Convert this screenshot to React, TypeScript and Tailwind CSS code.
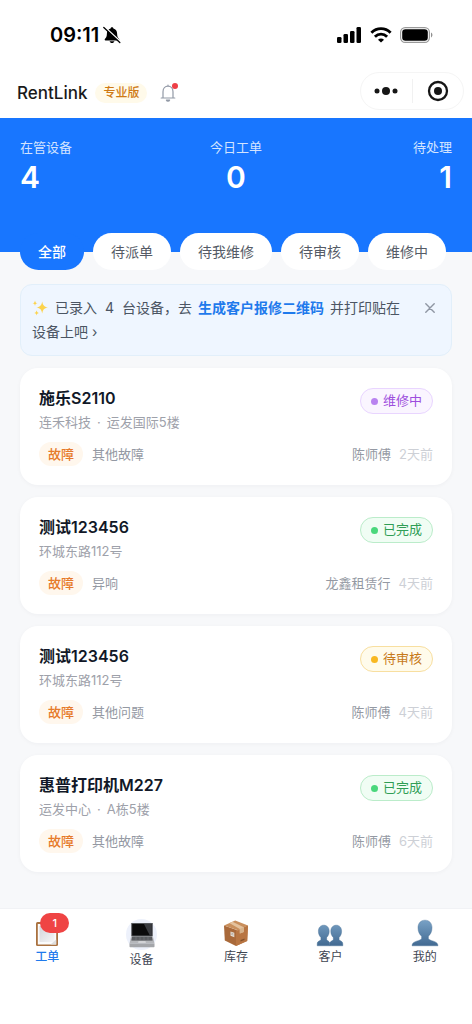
import { useState } from 'react'
import type { ReactNode } from 'react'
import clsx from 'clsx'

type Status = 'repairing' | 'done' | 'review'

interface Order {
  id: number
  device: string
  address: string[]
  issue: string
  owner: string
  time: string
  status: Status
}

const ORDERS: Order[] = [
  { id: 1, device: '施乐S2110', address: ['连禾科技', '运发国际5楼'], issue: '其他故障', owner: '陈师傅', time: '2天前', status: 'repairing' },
  { id: 2, device: '测试123456', address: ['环城东路112号'], issue: '异响', owner: '龙鑫租赁行', time: '4天前', status: 'done' },
  { id: 3, device: '测试123456', address: ['环城东路112号'], issue: '其他问题', owner: '陈师傅', time: '4天前', status: 'review' },
  { id: 4, device: '惠普打印机M227', address: ['运发中心', 'A栋5楼'], issue: '其他故障', owner: '陈师傅', time: '6天前', status: 'done' },
]

const STATUS: Record<Status, { label: string; pill: string; dot: string }> = {
  repairing: { label: '维修中', pill: 'border-[#e9d5ff] bg-[#faf5ff] text-[#9d4edd]', dot: 'bg-[#b983f0]' },
  done: { label: '已完成', pill: 'border-[#bbecca] bg-[#f0fdf4] text-[#2f9e55]', dot: 'bg-[#4ad77c]' },
  review: { label: '待审核', pill: 'border-[#f8dfa0] bg-[#fffbeb] text-[#c77a1a]', dot: 'bg-[#f8b822]' },
}

const TABS = ['全部', '待派单', '待我维修', '待审核', '维修中']

export default function App() {
  const [tab, setTab] = useState('全部')
  const [showTip, setShowTip] = useState(true)

  return (
    <div className="flex min-h-screen flex-col bg-[#f7f8fa] font-['Inter','Noto_Sans_CJK_SC',sans-serif] text-[#111827]">
      <StatusBar />
      <Header />

      {/* Summary */}
      <section className="grid h-[134px] grid-cols-3 bg-[#1876ff] px-5 pt-[19px] text-white">
        <Stat label="在管设备" value={4} />
        <Stat label="今日工单" value={0} className="text-center" />
        <Stat label="待处理" value={1} className="text-right" />
      </section>

      {/* Tabs */}
      <div className="relative -mt-[19px] flex gap-[9px] overflow-x-auto px-5">
        {TABS.map((name) => (
          <button
            key={name}
            onClick={() => setTab(name)}
            className={clsx(
              'h-[37px] shrink-0 rounded-full px-[18px] text-sm',
              tab === name ? 'bg-[#1876ff] font-medium text-white' : 'bg-white text-[#555b66]',
            )}
          >
            {name}
          </button>
        ))}
      </div>

      <main className="flex flex-1 flex-col gap-3 px-5 pt-[14px] pb-9">
        {showTip && (
          <div className="flex items-start gap-3 rounded-xl border border-[#e2effa] bg-[#eff6ff] py-[11px] pr-[9px] pl-[11px]">
            <p className="flex-1 text-sm leading-6 text-[#4b5563]">
              <Sparkles /> 已录入<span className="mx-2">4</span>台设备，去
              <a href="#qrcode" className="mx-[6px] font-bold text-[#1f7aec]">
                生成客户报修二维码
              </a>
              <span className="whitespace-nowrap">并打印贴在</span>
              <wbr />
              <span className="whitespace-nowrap">设备上吧 ›</span>
            </p>
            <button aria-label="关闭" onClick={() => setShowTip(false)} className="flex size-6 items-center justify-center text-[#8f96a3]">
              <svg viewBox="0 0 10 10" className="size-[10px]" stroke="currentColor" strokeWidth="1.4" strokeLinecap="round">
                <path d="M.8.8l8.4 8.4M9.2.8L.8 9.2" />
              </svg>
            </button>
          </div>
        )}

        {ORDERS.map((order) => (
          <OrderCard key={order.id} order={order} />
        ))}
      </main>

      <TabBar />
    </div>
  )
}

function StatusBar() {
  return (
    <div className="flex h-[68px] items-center justify-between bg-white pt-[2px] pr-[39px] pl-[50px] text-black">
      <div className="flex items-center gap-1">
        <span className="text-xl leading-6 font-semibold">09:11</span>
        <svg viewBox="0 0 18 18" className="size-[18px]">
          <path d="M9 1.2c.8 0 1.3.5 1.4 1.2 2.3.6 3.7 2.4 3.7 5 0 3.3.8 4.3 2 5.500.5.6.2 1.500-.6 1.500H2.500c-.8 0-1.100-.9-.6-1.500 1.200-1.200 2-2.200 2-5.500 0-2.600 1.400-4.400 3.700-5C7.700 1.700 8.200 1.200 9 1.200zM6.600 15.200h4.800c-.3 1.100-1.200 1.800-2.400 1.800s-2.100-.7-2.400-1.800z" />
          <path d="M2 1.400l15.500 14.200" stroke="#fff" strokeWidth="1.500" />
          <path d="M.8 1.500l16 15" stroke="#000" strokeWidth="1.300" strokeLinecap="round" />
        </svg>
      </div>
      <div className="flex items-center gap-2">
        <svg viewBox="0 0 25 16" className="h-4 w-[25px]">
          <rect x="0" y="10" width="4.500" height="6" rx="1.300" />
          <rect x="6.500" y="7" width="4.500" height="9" rx="1.300" />
          <rect x="13" y="4" width="4.500" height="12" rx="1.300" />
          <rect x="19.500" y="0" width="4.500" height="16" rx="1.300" />
        </svg>
        <svg viewBox="0 0 22 16" className="h-4 w-[22px]" fill="none" stroke="#000" strokeWidth="2.900">
          <path d="M1.400 5.700C6.900.3 15.100.3 20.600 5.700" />
          <path d="M4.900 9.700c3.500-3.400 8.700-3.400 12.200 0" />
          <path d="M11 15.600l-3-2.900c1.700-1.600 4.300-1.600 6 0z" fill="#000" stroke="none" />
        </svg>
        <svg viewBox="0 0 33 16" className="h-4 w-[33px]">
          <rect x=".6" y=".6" width="28.800" height="14.800" rx="4.600" fill="none" stroke="#9a9a9a" strokeWidth="1.200" />
          <rect x="2.200" y="2.200" width="25.600" height="11.600" rx="3.200" />
          <path d="M31 5.600c1.900.7 1.900 4.100 0 4.800z" fill="#8f8f8f" />
        </svg>
      </div>
    </div>
  )
}

function Header() {
  return (
    <header className="flex h-[50px] items-center justify-between bg-white pr-2 pb-1 pl-[17px]">
      <div className="flex items-center pt-1">
        <h1 className="text-[17px] leading-6 font-medium text-[#1a1a1a]">RentLink</h1>
        <span className="ml-2 rounded-full bg-[#fffaea] px-2 text-xs leading-5 font-medium text-[#cf7a15]">专业版</span>
        <button aria-label="通知" className="relative ml-3">
          <svg viewBox="0 0 18 20" className="h-5 w-[18px]" fill="none" stroke="#9299a6" strokeWidth="1.200" strokeLinecap="round" strokeLinejoin="round">
            <path d="M9 2v1M4 14.800V8.700C4 5.500 6.200 3.100 9 3.100s5 2.400 5 5.600v6.100M2.200 15h13.600" />
            <path d="M7.400 17c.5 1.500 2.700 1.500 3.200 0z" />
          </svg>
          <span className="absolute top-0 -right-px size-[6px] rounded-full bg-[#ee3f46]" />
        </button>
      </div>
      <div className="flex h-[38px] w-[104px] items-center rounded-full border border-[#f5f5f5] bg-white">
        <button aria-label="更多" className="flex flex-1 justify-center">
          <svg viewBox="0 0 24 10" className="h-[10px] w-6" fill="#161616">
            <circle cx="3" cy="5" r="2.500" />
            <circle cx="12" cy="5" r="4" />
            <circle cx="21" cy="5" r="2.500" />
          </svg>
        </button>
        <span className="h-6 w-px bg-[#f1f1f1]" />
        <button aria-label="退出" className="flex flex-1 justify-center">
          <svg viewBox="0 0 22 22" className="size-[22px]">
            <circle cx="11" cy="11" r="9" fill="none" stroke="#161616" strokeWidth="2.300" />
            <circle cx="11" cy="11" r="4" fill="#161616" />
          </svg>
        </button>
      </div>
    </header>
  )
}

function Stat({ label, value, className }: { label: string; value: number; className?: string }) {
  return (
    <div className={className}>
      <div className="text-[13px] leading-5 text-[#d3e4ff]">{label}</div>
      <div className="text-[30px] leading-10 font-semibold">{value}</div>
    </div>
  )
}

function OrderCard({ order }: { order: Order }) {
  const status = STATUS[order.status]
  return (
    <article className="rounded-[18px] bg-white px-[19px] pt-[18px] pb-[19px] shadow-[0_1px_4px_rgba(15,23,42,0.04)]">
      <div className="flex items-start justify-between">
        <div>
          <h2 className="text-base leading-6 font-semibold">{order.device}</h2>
          <p className="mt-[2px] text-[13px] leading-5 text-[#9ea1aa]">
            {order.address.map((part, i) => (
              <span key={part}>
                {i > 0 && <span className="mx-[6px]">·</span>}
                {part}
              </span>
            ))}
          </p>
        </div>
        <span className={clsx('mt-[2px] flex h-[26px] items-center gap-[5px] rounded-full border px-[10px] text-[13px]', status.pill)}>
          <span className={clsx('size-[7px] rounded-full', status.dot)} />
          {status.label}
        </span>
      </div>
      <div className="mt-[10px] flex items-center text-[13px] leading-6 text-[#9499a3]">
        <span className="rounded-full bg-[#fff7ed] px-[9px] font-medium text-[#e67a2a]">故障</span>
        <span className="ml-[9px]">{order.issue}</span>
        <span className="ml-auto">{order.owner}</span>
        <span className="ml-2 text-[#cdd0d6]">{order.time}</span>
      </div>
    </article>
  )
}

function TabBar() {
  return (
    <nav className="grid h-[116px] grid-cols-5 items-start border-t border-[#f1f2f5] bg-white pt-[10px]">
      <TabItem label="工单" icon={<ClipboardIcon />} badge={1} active />
      <TabItem label="设备" icon={<LaptopIcon />} large />
      <TabItem label="库存" icon={<BoxIcon />} />
      <TabItem label="客户" icon={<UsersIcon />} />
      <TabItem label="我的" icon={<UserIcon />} />
    </nav>
  )
}

interface TabItemProps {
  label: string
  icon: ReactNode
  badge?: number
  active?: boolean
  large?: boolean
}

function TabItem({ label, icon, badge, active, large }: TabItemProps) {
  return (
    <a href={`#${label}`} className="flex flex-col items-center">
      <span className={clsx('relative flex items-center justify-center', large ? 'size-[31px] rounded-full bg-[#edf1fb]' : 'size-7')}>
        {icon}
        {badge && (
          <span className="absolute -top-[6px] left-[7px] w-[29px] rounded-full bg-[#ef4444] text-center text-[11px] leading-5 font-medium text-white">
            {badge}
          </span>
        )}
      </span>
      <span className={clsx('text-xs leading-5', active ? 'font-medium text-[#1f7aec]' : 'text-[#3f4652]')}>{label}</span>
    </a>
  )
}

function Sparkles() {
  return (
    <svg viewBox="0 0 17 16" className="mr-[2px] inline h-4 w-[17px] align-[-3px]" fill="#fcd34d">
      <path d="M10.200 1.500c.7 3.800 1.700 5.200 5.800 6-4.100.8-5.100 2.200-5.800 6-.7-3.800-1.700-5.200-5.800-6 4.100-.8 5.100-2.200 5.800-6z" />
      <path d="M3 .6c.3 1.700.8 2.400 2.500 2.700C3.800 3.600 3.300 4.300 3 6 2.700 4.300 2.200 3.600.5 3.300 2.200 3 2.700 2.300 3 .6z" />
      <path d="M4.600 10.200c.3 1.700.8 2.400 2.500 2.700-1.700.3-2.200 1-2.500 2.700-.3-1.700-.8-2.400-2.500-2.700 1.700-.3 2.200-1 2.500-2.700z" />
    </svg>
  )
}

function ClipboardIcon() {
  return (
    <svg viewBox="0 0 28 28" className="size-7">
      <defs>
        <linearGradient id="paper" x1="0" y1="0" x2="1" y2="1">
          <stop offset="0" stopColor="#d3d5da" />
          <stop offset="1" stopColor="#f6f6f6" />
        </linearGradient>
      </defs>
      <rect x="3" y="3" width="22" height="24" rx="1.500" fill="#a9713f" />
      <rect x="4.800" y="5" width="18.400" height="20.500" fill="#fbfbfb" />
      <rect x="6.500" y="7" width="15" height="16" fill="url(#paper)" />
      <rect x="9" y="1.500" width="10" height="4" rx="1" fill="#9ba1a8" />
      <path d="M17.500 25.500l5.700-5v5z" fill="#dedede" />
    </svg>
  )
}

function LaptopIcon() {
  return (
    <svg viewBox="0 0 28 28" className="size-7">
      <path d="M3.200 2h21.600v13H3.200z" fill="#55585c" />
      <path d="M4.200 3h19.600v11.500H4.200z" fill="#0b0b0c" />
      <path d="M16 3h7.800v11.500h-2z" fill="#3a3c40" />
      <path d="M3.200 15h21.600l1.700 7.500h-25z" fill="#b5b7bb" />
      <path d="M4.200 15.500h19.600l.8 4H3.400z" fill="#4c4e52" />
      <path d="M4.300 16.900h19.400M4 18.200h20M8 15.500v4M12 15.500v4M16 15.500v4M20 15.500v4" stroke="#8b8d92" strokeWidth=".4" />
      <path d="M10.500 20h7l.4 2.200h-7.800z" fill="#d2d3d6" />
      <path d="M1.500 22.500h25v3c0 .4-.3.700-.7.700H2.200c-.4 0-.7-.3-.7-.7z" fill="#a4a6aa" />
    </svg>
  )
}

function BoxIcon() {
  return (
    <svg viewBox="0 0 28 28" className="size-7">
      <path d="M2 6.500l12 4.200V27L2.800 21.500z" fill="#a9693a" />
      <path d="M26 6.500l-9.500 4.200L14 27l11.200-5z" fill="#be7f4a" />
      <path d="M2 6.500L13.200 1.500 26 6.500l-9.500 5z" fill="#c98f5c" />
      <path d="M14 11l2.500.3L26 6.500l-.8 15.500L14 27z" fill="#b87542" />
      <path d="M7.300 4.100l3.200-1.400 11.300 5.500v4.700l-4 1.500v-4.300z" fill="#e4c29d" />
      <path d="M17.800 10.100l4-1.900v4.700l-4 1.500z" fill="#d6b28b" />
      <path d="M8.500 12.500l3.800 1.300v4.400l-3.800-1.500z" fill="#e7dfd5" />
      <path d="M9.200 14l2.300.8M9.200 15.300l2.300.8" stroke="#8e8378" strokeWidth=".5" />
      <path d="M18.500 21l4-1.600v1.500l-4 1.600z" fill="#80502b" />
    </svg>
  )
}

function BlueGradient({ id }: { id: string }) {
  return (
    <linearGradient id={id} x1="0" y1="0" x2="0" y2="28" gradientUnits="userSpaceOnUse">
      <stop offset="0" stopColor="#7ba4c8" />
      <stop offset="1" stopColor="#3f678f" />
    </linearGradient>
  )
}

function UsersIcon() {
  return (
    <svg viewBox="0 0 28 28" className="size-7">
      <BlueGradient id="users" />
      <g fill="url(#users)" stroke="#466f96" strokeWidth=".4">
        <path d="M7.800 6.200c3.300 0 5.400 2.400 5.400 6 0 2.600-.9 4.900-2.500 6.200v2.200c.3 1.400 3.100 1.100 3.100 4.200v2H1.200v-2c0-3.100 3.400-2.800 3.700-4.200v-2.200c-1.600-1.300-2.500-3.600-2.500-6.200 0-3.600 2.100-6 5.400-6z" />
        <path d="M20.200 6.200c3.300 0 5.400 2.400 5.400 6 0 2.600-.9 4.900-2.500 6.200v2.200c.3 1.400 3.700 1.100 3.700 4.200v2h-13v-2c0-3.100 3.200-2.800 3.500-4.200v-2.200c-1.600-1.300-2.500-3.600-2.500-6.200 0-3.600 2.100-6 5.400-6z" />
      </g>
    </svg>
  )
}

function UserIcon() {
  return (
    <svg viewBox="0 0 28 28" className="size-7">
      <BlueGradient id="user" />
      <path
        d="M14 1.200c4.300 0 7 3 7 7.500 0 3.700-1.400 6.900-3.600 8.500v2.200c.7 2.900 9.600 1.900 9.600 7.400H1c0-5.500 8.900-4.500 9.600-7.400v-2.200C8.400 15.600 7 12.400 7 8.700c0-4.500 2.700-7.500 7-7.500z"
        fill="url(#user)"
        stroke="#466f96"
        strokeWidth=".4"
      />
    </svg>
  )
}
